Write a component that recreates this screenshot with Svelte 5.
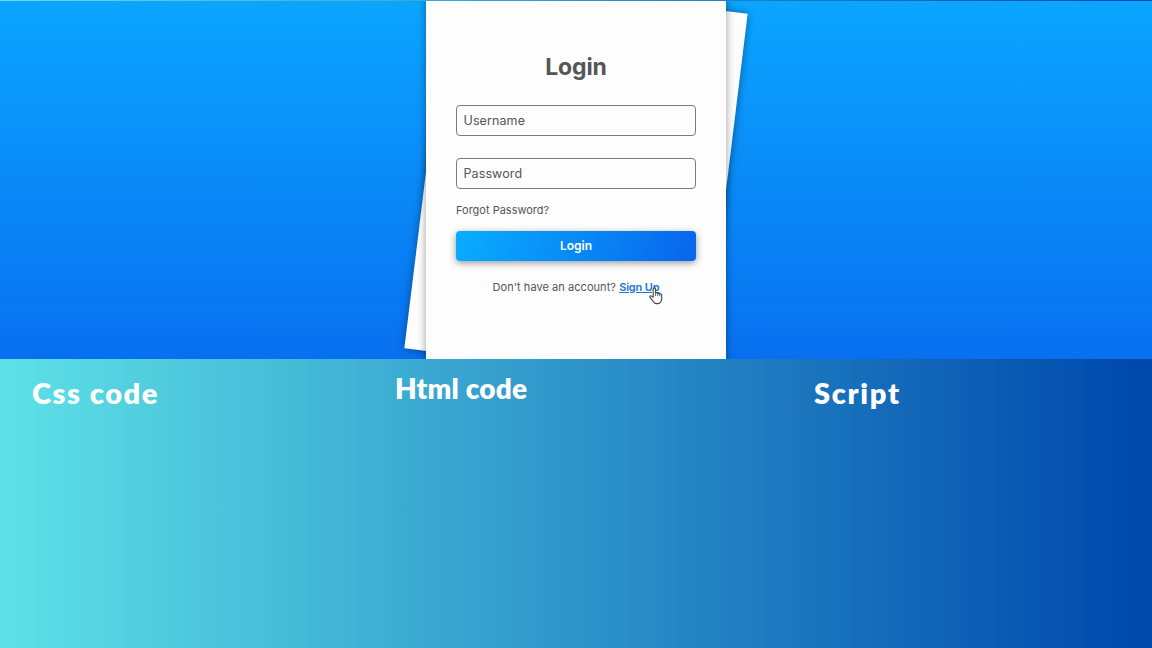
<script>
  const fields = ['Username', 'Password'];
</script>

<main>
  <section class="hero">
    <div class="stack">
      <div class="sheet"></div>
      <div class="card">
        <h1>Login</h1>
        <form>
          {#each fields as field}
            <div class="field">{field}</div>
          {/each}
          <span class="forgot">Forgot Password?</span>
          <button type="button">Login</button>
          <p>Don't have an account? <a href="#signup">Sign Up</a></p>
        </form>
        <svg class="cursor" viewBox="0 0 14 18" width="14" height="18">
          <path d="M4.2 10.2V2.1a1.2 1.2 0 0 1 2.4 0v4.2c.4-.8 2-.7 2.2.3.5-.7 1.900-.5 2 .5.7-.5 1.900-.2 1.900 1v3.800c0 1.500-.6 2.200-1.100 3.200-.6 1-1.600 1.500-2.800 1.500H7.300c-1.200 0-1.900-.6-2.500-1.600C3.700 13.300 2.200 12 1 10.400c-.6-1.200.6-2.100 1.600-1.300z" fill="#fff" stroke="#444" stroke-width="1.1" stroke-linejoin="round" />
          <path d="M6.6 6.300v2.800M8.800 6.700v2.400M10.800 7.100v2.200" fill="none" stroke="#444" stroke-width=".8" />
        </svg>
      </div>
    </div>
  </section>
  <section class="titles">
    <h2 class="css">Css code</h2>
    <h2 class="html">Html code</h2>
    <h2 class="script">Script</h2>
  </section>
</main>

<style>
  :global(body) { margin: 0; }
  main {
    box-sizing: border-box;
    width: 1152px;
    height: 648px;
    padding-top: 1px;
    overflow: hidden;
    background: linear-gradient(90deg, #5de0e6 1%, #004aad 98%);
    font-family: Inter, "Open Sans", sans-serif;
    color: #555;
  }
  .hero {
    height: 358px;
    overflow: hidden;
    display: flex;
    justify-content: center;
    background: linear-gradient(#0ba5ff, #0870f0);
  }
  .stack { position: relative; width: 300px; height: 374px; margin-top: -7px; flex: none; }
  .sheet {
    position: absolute;
    inset: 0;
    background: #fdfdfd;
    transform: rotate(7deg);
    box-shadow: 0 0 8px rgba(0, 0, 0, .4);
  }
  .card {
    position: relative;
    box-sizing: border-box;
    height: 100%;
    padding: 56px 30px 0;
    background: #fdfdfd;
    box-shadow: 0 0 8px rgba(0, 0, 0, .4);
  }
  h1 { margin: 0; height: 32px; text-align: center; font-size: 23px; line-height: 34px; font-weight: 700; letter-spacing: -.1px; }
  form { display: flex; flex-direction: column; margin-top: 23px; }
  .field {
    box-sizing: border-box;
    height: 31px;
    margin-bottom: 22px;
    border: 1px solid #7c7c7c;
    border-radius: 4px;
    padding-left: 6.5px;
    font-size: 12.5px;
    line-height: 30px;
    letter-spacing: .1px;
  }
  .forgot { margin-top: -8px; font-size: 11px; line-height: 15px; height: 28px; }
  button {
    height: 30px;
    padding: 0;
    border: 0;
    border-radius: 4px;
    background: linear-gradient(110deg, #08aeff, #0865ec);
    box-shadow: 0 2px 7px rgba(0, 0, 0, .4);
    color: #fff;
    font: 600 12px/30px Inter, sans-serif;
  }
  p { margin: 18px 0 0; text-align: center; font-size: 11px; line-height: 16px; white-space: nowrap; letter-spacing: .05px; }
  a { color: #1a76d4; font-weight: 600; letter-spacing: -.15px; }
  .cursor { position: absolute; left: 222.5px; top: 293px; }
  .titles {
    display: grid;
    grid-template-columns: 362px 420px 1fr;
    margin-top: .5px;
    color: #fff;
    font-family: Lato, sans-serif;
  }
  h2 { margin: 0; padding-left: 32px; font-size: 29px; line-height: 36px; font-weight: 800; letter-spacing: 1.55px; }
  .css, .script { padding-top: 15px; }
  .script { letter-spacing: 1.7px; }
  .html { padding-top: 10px; padding-left: 33px; font-size: 28px; letter-spacing: .2px; }
</style>
